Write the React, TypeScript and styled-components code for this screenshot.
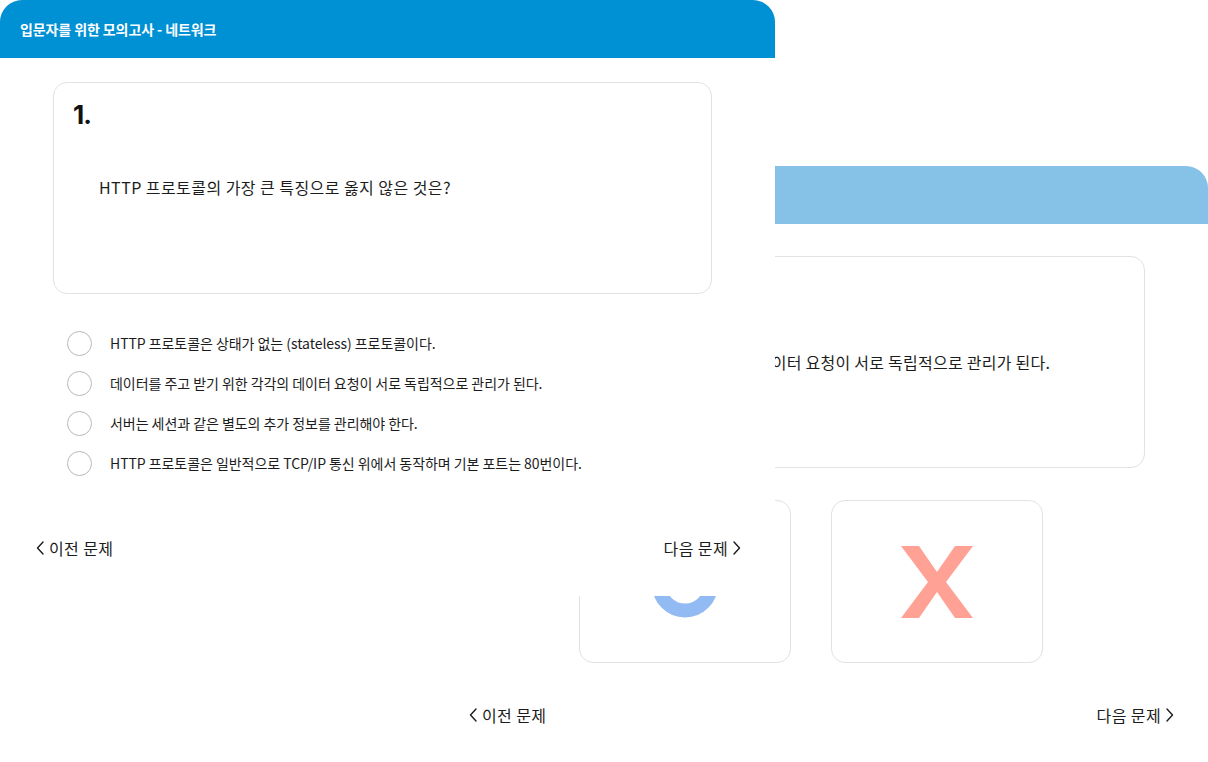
import React from "react";
import styled, { createGlobalStyle } from "styled-components";

const Global = createGlobalStyle`
  html, body { margin: 0; padding: 0; background: #ffffff; }
  body { overflow: hidden; font-family: "Noto Sans CJK KR", "Noto Sans", sans-serif; color: #1c1c1c; }
  * { box-sizing: border-box; }
`;

const Desktop = styled.div`
  position: relative;
  width: 1208px;
  height: 762px;
  overflow: hidden;
  background: #ffffff;
`;

const Window = styled.section<{ $x: number; $y: number; $z: number }>`
  position: absolute;
  left: ${(p) => p.$x}px;
  top: ${(p) => p.$y}px;
  z-index: ${(p) => p.$z};
  width: 775px;
  height: 596px;
  background: #ffffff;
  display: flex;
  flex-direction: column;
`;

const Header = styled.header<{ $color: string }>`
  height: 58px;
  flex: none;
  background: ${(p) => p.$color};
  border-radius: 22px 22px 0 0;
  display: flex;
  align-items: center;
  padding-left: 20px;
  color: #ffffff;
  font-size: 14px;
  font-weight: 700;
  letter-spacing: -0.1px;
`;

const QuestionCard = styled.div<{ $top: number }>`
  margin: ${(p) => p.$top}px 0 0 53px;
  width: 659px;
  height: 212px;
  flex: none;
  border: 1px solid #e2e2e2;
  border-radius: 14px;
  background: #ffffff;
  display: flex;
  flex-direction: column;
  padding: 16px 19px;
`;

const Number = styled.div`
  font-size: 26px;
  line-height: 32px;
  font-weight: 700;
  color: #111111;
  font-family: "Inter", "Noto Sans CJK KR", sans-serif;
  letter-spacing: -1px;
`;

const QuestionText = styled.div`
  margin: 44px 0 0 26px;
  font-size: 16px;
  line-height: 24px;
  letter-spacing: 0.45px;
  color: #1c1c1c;
`;

const AnswerCard = styled(QuestionCard)`
  justify-content: center;
  padding-left: 56px;
  font-size: 16px;
  letter-spacing: 0.25px;
  color: #1c1c1c;
`;

const Options = styled.ul`
  list-style: none;
  margin: 29px 0 0 67px;
  padding: 0;
  display: flex;
  flex-direction: column;
`;

const Option = styled.li`
  height: 40px;
  display: flex;
  align-items: center;
  gap: 18px;
  font-size: 14px;
  letter-spacing: -0.05px;
  color: #1c1c1c;
`;

const Radio = styled.span`
  width: 25px;
  height: 25px;
  flex: none;
  border-radius: 50%;
  border: 1px solid #b9b9b9;
`;

const Nav = styled.nav<{ $top: number }>`
  margin-top: ${(p) => p.$top}px;
  height: 24px;
  padding: 0 34px 0 36px;
  display: flex;
  align-items: center;
  justify-content: space-between;
  font-size: 16px;
  letter-spacing: 0.4px;
  color: #1c1c1c;
`;

const NavButton = styled.span`
  display: flex;
  align-items: center;
  gap: 5px;
`;

const ChoiceRow = styled.div`
  margin: 32px 0 0 146px;
  display: flex;
  gap: 40px;
`;

const ChoiceCard = styled.div`
  width: 212px;
  height: 163px;
  border: 1px solid #e2e2e2;
  border-radius: 14px;
  display: flex;
  align-items: center;
  justify-content: center;
`;

const Chevron = ({ dir }: { dir: "left" | "right" }) => (
  <svg width="8" height="14" viewBox="0 0 8 14" fill="none">
    <path
      d={dir === "left" ? "M7 1 L1.5 7 L7 13" : "M1 1 L6.5 7 L1 13"}
      stroke="#1c1c1c"
      strokeWidth="1.4"
      strokeLinecap="round"
      strokeLinejoin="round"
    />
  </svg>
);

const OMark = () => (
  <svg width="72" height="72" viewBox="0 0 72 72">
    <circle cx="36" cy="38.5" r="26" fill="none" stroke="#92baf3" strokeWidth="14" />
  </svg>
);

const XMark = () => (
  <svg width="72" height="72" viewBox="0 0 72 72">
    <polygon
      points="0,0 18,0 36,26 54,0 72,0 45,36 72,72 54,72 36,46 18,72 0,72 27,36"
      fill="#ffa295"
    />
  </svg>
);

const options = [
  "HTTP 프로토콜은 상태가 없는 (stateless) 프로토콜이다.",
  "데이터를 주고 받기 위한 각각의 데이터 요청이 서로 독립적으로 관리가 된다.",
  "서버는 세션과 같은 별도의 추가 정보를 관리해야 한다.",
  "HTTP 프로토콜은 일반적으로 TCP/IP 통신 위에서 동작하며 기본 포트는 80번이다.",
];

const Navigation = ({ top }: { top: number }) => (
  <Nav $top={top}>
    <NavButton>
      <Chevron dir="left" /> 이전 문제
    </NavButton>
    <NavButton>
      다음 문제 <Chevron dir="right" />
    </NavButton>
  </Nav>
);

export default function App() {
  return (
    <>
      <Global />
      <Desktop>
        <Window $x={433} $y={166} $z={1}>
          <Header $color="#86c1e8" />
          <AnswerCard $top={32}>
            데이터를 주고 받기 위한 각각의 데이터 요청이 서로 독립적으로 관리가 된다.
          </AnswerCard>
          <ChoiceRow>
            <ChoiceCard>
              <OMark />
            </ChoiceCard>
            <ChoiceCard>
              <XMark />
            </ChoiceCard>
          </ChoiceRow>
          <Navigation top={40} />
        </Window>
        <Window $x={0} $y={0} $z={2}>
          <Header $color="#0090d4">입문자를 위한 모의고사 - 네트워크</Header>
          <QuestionCard $top={24}>
            <Number>1.</Number>
            <QuestionText>HTTP 프로토콜의 가장 큰 특징으로 옳지 않은 것은?</QuestionText>
          </QuestionCard>
          <Options>
            {options.map((o) => (
              <Option key={o}>
                <Radio />
                {o}
              </Option>
            ))}
          </Options>
          <Navigation top={53} />
        </Window>
      </Desktop>
    </>
  );
}
